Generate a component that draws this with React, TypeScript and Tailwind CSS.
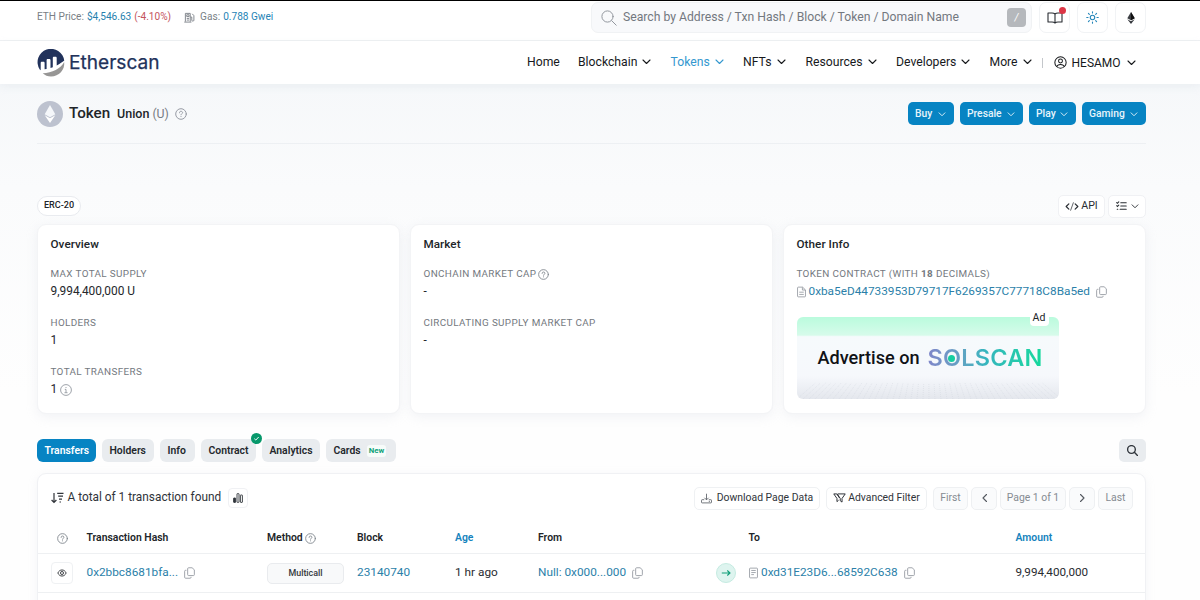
import type { ReactNode } from "react";

const Chevron = ({ className = "h-[6px] w-[9px]" }: { className?: string }) => (
  <svg viewBox="0 0 9 6" className={`shrink-0 ${className}`} fill="none" stroke="currentColor" strokeWidth="1.1" strokeLinecap="round" strokeLinejoin="round">
    <path d="M1 1l3.5 3.5L8 1" />
  </svg>
);

const Help = ({ className = "" }: { className?: string }) => (
  <svg viewBox="0 0 12 12" className={`h-[11px] w-[11px] shrink-0 text-[#7d838b] ${className}`} fill="none" stroke="currentColor" strokeWidth="0.95" strokeLinecap="round">
    <circle cx="6" cy="6" r="5.3" />
    <path d="M4.5 4.8C4.5 3.7 5.1 3.3 6 3.3s1.6.5 1.6 1.4C7.6 5.6 6 5.7 6 6.8M6 8.5v.15" />
  </svg>
);

const Copy = ({ className = "" }: { className?: string }) => (
  <svg viewBox="0 0 12 13" className={`h-[12px] w-[11px] shrink-0 text-[#989da4] ${className}`} fill="none" stroke="currentColor" strokeWidth="1">
    <path d="M5 .8h3.8L11.3 3v5.3a1 1 0 0 1-1 1H5a1 1 0 0 1-1-1V1.8a1 1 0 0 1 1-1z" />
    <path d="M2.6 3.6H1.7a1 1 0 0 0-1 1v6.6a1 1 0 0 0 1 1h5a1 1 0 0 0 1-1v-.5" />
  </svg>
);

const Doc = () => (
  <svg viewBox="0 0 10 12" className="h-[12px] w-[9px] shrink-0 text-[#8f959c]" fill="none" stroke="currentColor" strokeWidth="0.9">
    <path d="M1.5.6h4.7L9.4 3.7v6.8a.9.9 0 0 1-.9.9h-7a.9.9 0 0 1-.9-.9v-9a.9.9 0 0 1 .9-.9zM6 .8v3h3.2M2.5 6.2h5M2.5 8.7h5" />
  </svg>
);

const DocLines = () => (
  <svg viewBox="0 0 10 12" className="h-[12px] w-[9px] shrink-0 text-[#8f959c]" fill="none" stroke="currentColor" strokeWidth="0.9">
    <rect x="0.6" y="0.6" width="8.8" height="10.8" rx="0.8" />
    <path d="M2.5 3.2h5M2.5 5.5h5M2.5 7.8h3" />
  </svg>
);

const SearchIcon = ({ className = "" }: { className?: string }) => (
  <svg viewBox="0 0 16 16" className={className} fill="none" stroke="currentColor" strokeLinecap="round">
    <circle cx="6.5" cy="6.5" r="5.6" />
    <path d="M10.7 10.7l4.500 4.500" />
  </svg>
);

const SquareButton = ({ children }: { children: ReactNode }) => (
  <button className="relative flex h-[31px] w-[31px] items-center justify-center rounded-[7px] border border-[#f1f3f5] bg-white">{children}</button>
);

const NavItem = ({ label, width, active }: { label: string; width: string; active?: boolean }) => (
  <a className={`flex items-center justify-between ${width} ${active ? "text-[#3498cf]" : "text-[#17191c]"}`}>
    {label}
    <Chevron />
  </a>
);

const ActionButton = ({ label, width }: { label: string; width: string }) => (
  <button className={`flex h-[23px] items-center justify-between rounded-[5px] bg-[#0784c3] pt-px pr-[8px] pl-[7px] text-[10.3px] font-medium text-[#e7f4fb] ${width}`}>
    {label}
    <Chevron className="h-[5px] w-[8px]" />
  </button>
);

const Card = ({ title, children }: { title: string; children: ReactNode }) => (
  <section className="h-[190px] w-[363px] rounded-[9px] border border-[#f3f4f6] bg-white pt-[10px] pl-[12.5px] shadow-[0_3px_12px_rgba(189,197,209,0.2)]">
    <h2 className="h-[18px] text-[11.7px] leading-[18px] font-medium tracking-[0.05px] text-[#212529]">{title}</h2>
    {children}
  </section>
);

const Stat = ({ label, children, first }: { label: ReactNode; children: ReactNode; first?: boolean }) => (
  <div className={`${first ? "mt-[12px]" : "mt-[13px]"} h-[36px]`}>
    <div className="flex h-[18px] items-center text-[9.9px] tracking-[0.36px] whitespace-nowrap text-[#747980]">{label}</div>
    <div className="flex h-[18px] items-center text-[11.9px] text-[#25282c]">{children}</div>
  </div>
);

const Tab = ({ label, width, active, children }: { label: string; width: string; active?: boolean; children?: ReactNode }) => (
  <button className={`relative flex h-[23px] items-center rounded-[6px] px-[7.5px] pt-px text-[10.4px] font-semibold ${width} ${active ? "bg-[#0784c3] text-white" : "bg-[#e9ecef] text-[#24282d]"}`}>
    {label}
    {children}
  </button>
);

const PageButton = ({ width, children }: { width: string; children: ReactNode }) => (
  <button className={`flex h-[23px] items-center justify-center rounded-[5px] border border-[#eef0f2] bg-[#fafbfc] text-[10.4px] text-[#868b92] ${width}`}>{children}</button>
);

const rowGrid = "grid grid-cols-[48.5px_180.5px_90px_98px_83px_177.5px_33px_267px_1fr] items-center";

export default function App() {
  return (
    <div className="h-[600px] w-[1200px] overflow-hidden bg-[#fefefe] font-['Roboto',sans-serif] text-[12px] leading-none text-[#212529]">
      <div className="flex h-[41px] items-start justify-between border-t border-b border-t-black border-b-[#eff1f3] bg-white pr-[54px] pl-[37px]">
        <div className="flex h-[33px] items-center text-[10.1px] text-[#7a7f86]">
          <span>ETH Price:</span>
          <span className="ml-[3px] text-[#277fae]">$4,546.63</span>
          <span className="ml-[3px] text-[#c4525c]">(-4.10%)</span>
          <svg viewBox="0 0 12 12" className="mr-[5px] ml-[13px] h-[11px] w-[11px] text-[#7a7f86]" fill="none" stroke="currentColor" strokeWidth="1">
            <path d="M1.500 10.500v-9h5.300v9M.3 11h7.800M3 3h2.500v2H3zM3 7h2.500M3 8.800h2.500M7 5.500h1.500v3.500c0 1.300 2.300 1.300 2.300 0V4L9 2" />
          </svg>
          <span>Gas:</span>
          <span className="ml-[3px] text-[#2583b5]">0.788 Gwei</span>
        </div>
        <div className="flex pt-px">
          <div className="flex h-[31px] w-[441px] items-center rounded-[7px] border border-[#f0f2f4] bg-[#f8f9fb] pr-[5px] pl-[9px] text-[12.2px] text-[#73787f]">
            <SearchIcon className="h-[16px] w-[16px] text-[#92979e]" />
            <span className="ml-[6px] whitespace-nowrap">Search by Address / Txn Hash / Block / Token / Domain Name</span>
            <span className="ml-auto flex h-[19px] w-[19px] items-center justify-center rounded-[4px] bg-[#b5b8bc] text-[10px] text-white italic">/</span>
          </div>
          <div className="ml-[7px] flex gap-[7px]">
            <SquareButton>
              <svg viewBox="0 0 16 12" className="h-[12px] w-[16px] text-[#292d32]" fill="none" stroke="currentColor" strokeWidth="1.1" strokeLinejoin="round">
                <path d="M8 2v9M8 2C7 1 6 1 5 1H1v9h4c1 0 2 0 3 1 1-1 2-1 3-1h4V1h-4C10 1 9 1 8 2z" />
              </svg>
              <span className="absolute top-[4px] right-[3px] h-[7px] w-[7px] rounded-full bg-[#dc3545]" />
            </SquareButton>
            <SquareButton>
              <svg viewBox="0 0 14 14" className="h-[13px] w-[13px] text-[#2587ba]" fill="none" stroke="currentColor" strokeWidth="1.2" strokeLinecap="round">
                <circle cx="7" cy="7" r="2.4" />
                <path d="M7 .8v1.400M7 11.800v1.400M.8 7h1.400M11.800 7h1.400M2.600 2.600l1 1M10.400 10.400l1 1M2.600 11.400l1-1M10.400 3.600l1-1" />
              </svg>
            </SquareButton>
            <SquareButton>
              <svg viewBox="0 0 8 13" className="h-[12px] w-[8px]">
                <path d="M4 0l4 6.700-4 2.300-4-2.300z" fill="#3b3e43" />
                <path d="M4 0l4 6.700-4 2.300z" fill="#111" />
                <path d="M0 7.800L4 10l4-2.200-4 5.200z" fill="#34373c" />
              </svg>
            </SquareButton>
          </div>
        </div>
      </div>

      <header className="relative flex h-[43px] items-center bg-white pl-[37px] shadow-[0_3px_8px_rgba(189,197,209,0.18)]">
        <svg viewBox="0 0 28 28" className="h-[28px] w-[28px]">
          <path d="M2.700 20.500A13.400 13.400 0 1 1 27.300 12C25 16 17 20 6.300 20.800V13.200H4v8z" fill="#21325b" />
          <path d="M3.700 21V14c0-.8.500-1.200 1.100-1.200h1.700c.7 0 1.100.5 1.100 1.200v6.400l2-.3V11.200c0-.7.5-1.200 1.100-1.200h1.700c.6 0 1.100.5 1.100 1.200v7.800l2.300-.8V9c0-.7.500-1.200 1.100-1.200h1.700c.6 0 1.100.5 1.100 1.200v7.500c3-1.700 6-3.700 8-5.300l.3 1.200c-3 5-11 10.500-24.300 11z" fill="white" />
          <path d="M5.700 24.200C15 23.900 24 19.500 27.200 13 28 21 22 27.500 14 27.500c-3.200 0-6.200-1.300-8.300-3.300z" fill="#979695" />
        </svg>
        <span className="ml-[4px] w-[92px] font-['Inter',sans-serif] text-[19.1px] text-[#21325b] [-webkit-text-stroke:0.25px_#21325b]">Etherscan</span>
        <nav className="ml-[366px] flex items-center gap-[19.5px] text-[12.2px]">
          <a className="w-[31.5px] text-[#17191c]">Home</a>
          <NavItem label="Blockchain" width="w-[73px]" />
          <NavItem label="Tokens" width="w-[53px]" active />
          <NavItem label="NFTs" width="w-[43px]" />
          <NavItem label="Resources" width="w-[71px]" />
          <NavItem label="Developers" width="w-[74px]" />
          <NavItem label="More" width="w-[42px]" />
        </nav>
        <span className="ml-[10px] h-[10px] w-px bg-[#c4c7cb]" />
        <svg viewBox="0 0 14 14" className="ml-[11px] h-[13px] w-[13px] text-[#17191c]" fill="none" stroke="currentColor" strokeWidth="1.100">
          <circle cx="7" cy="7" r="6.100" />
          <circle cx="7" cy="5.400" r="2.100" />
          <path d="M3 11.400c.5-1.700 1.700-2.300 4-2.300s3.500.6 4 2.300" />
        </svg>
        <a className="ml-[5px] flex w-[64px] items-center justify-between text-[12px] text-[#17191c]">
          HESAMO
          <Chevron />
        </a>
      </header>

      <main className="h-[516px] bg-linear-to-b from-[#f6f8fa] via-[#fafbfc] via-20% to-[#fefefe] to-60% px-[37px]">
        <div className="flex h-[60px] w-[1109px] items-center border-b border-[#edf0f3]">
          <svg viewBox="0 0 26 26" className="h-[26px] w-[26px]">
            <circle cx="13" cy="13" r="13" fill="#bdc2cf" />
            <path d="M13 4l5.300 9.200-5.300 3-5.300-3z" fill="#f5f7fa" />
            <path d="M7.700 14.300l5.300 3 5.300-3L13 22z" fill="#fff" />
          </svg>
          <h1 className="mt-px ml-[6px] w-[48px] text-[15.200px] font-medium text-[#212529]">Token</h1>
          <span className="mt-px text-[12.500px] font-medium text-[#212529]">Union</span>
          <span className="mt-px ml-[3px] text-[12.300px] text-[#777c84]">(U)</span>
          <Help className="ml-[6px] h-[12px] w-[12px] text-[#9297a0]" />
          <div className="ml-auto flex gap-[6px]">
            <ActionButton label="Buy" width="w-[46px]" />
            <ActionButton label="Presale" width="w-[63px]" />
            <ActionButton label="Play" width="w-[47px]" />
            <ActionButton label="Gaming" width="w-[64px]" />
          </div>
        </div>

        <div className="mt-[50px] flex h-[24px] w-[1109px] items-center">
          <span className="flex h-[20px] w-[44px] items-center justify-center rounded-full border border-[#e9ebef] bg-white text-[9.100px] font-medium">ERC-20</span>
          <button className="ml-auto flex h-[23px] w-[47px] items-center justify-center gap-[2px] rounded-[5px] border border-[#f0f1f4] bg-white text-[10.600px] text-[#292d32]">
            <svg viewBox="0 0 15 10" className="h-[9px] w-[14px]" fill="none" stroke="currentColor" strokeWidth="1.300" strokeLinecap="round" strokeLinejoin="round">
              <path d="M4 2L1 5l3 3M11 2l3 3-3 3" />
              <path d="M9 .8L6 9.200" strokeWidth="0.800" />
            </svg>
            API
          </button>
          <button className="ml-[3px] flex h-[23px] w-[38px] items-center justify-center gap-[4px] rounded-[5px] border border-[#f0f1f4] bg-white text-[#292d32]">
            <svg viewBox="0 0 12 11" className="h-[10px] w-[11px]" fill="none" stroke="currentColor" strokeWidth="1.200" strokeLinecap="round">
              <path d="M.7 1.700l.8.800L3 1M.7 5.200l.8.800L3 4.500M5.200 2h6M5.200 5.500h6M4.500 9h6.700M1.300 9h.6" />
            </svg>
            <Chevron className="h-[5px] w-[8px]" />
          </button>
        </div>

        <div className="mt-[6px] flex gap-[10px]">
          <Card title="Overview">
            <Stat first label="MAX TOTAL SUPPLY">9,994,400,000 U</Stat>
            <Stat label="HOLDERS">1</Stat>
            <Stat label="TOTAL TRANSFERS">
              1
              <svg viewBox="0 0 12 12" className="ml-[3px] h-[12px] w-[12px] text-[#9398a0]" fill="none" stroke="currentColor" strokeWidth="0.900">
                <circle cx="6" cy="6" r="5.400" />
                <path d="M6 3v1M4.800 5.400H6v3.100M4.500 8.700h3" />
              </svg>
            </Stat>
          </Card>
          <Card title="Market">
            <Stat first label={<>ONCHAIN MARKET CAP <Help className="ml-[2px]" /></>}>-</Stat>
            <Stat label="CIRCULATING SUPPLY MARKET CAP">-</Stat>
          </Card>
          <Card title="Other Info">
            <Stat first label={<span>TOKEN CONTRACT (WITH <b className="font-bold">18</b> DECIMALS)</span>}>
              <Doc />
              <a className="ml-[3px] w-[283px] text-[11.800px] text-[#2b7fa9]">0xba5eD44733953D79717F6269357C77718C8Ba5ed</a>
              <Copy className="ml-[4px]" />
            </Stat>
            <div className="relative mt-[16px] flex h-[82px] w-[262px] items-center rounded-[6px] bg-[linear-gradient(#bafbdd_0%,#d6fbea_22%,#f6fafc_24%,#f6f8fc_72%,#e4e7ed_100%)]">
              <svg viewBox="0 0 262 18" className="absolute bottom-0 left-0 h-[18px] w-[262px] rounded-b-[6px]" stroke="#cfd4dc" strokeWidth="0.600" opacity="0.700">
                {Array.from({ length: 45 }, (_, i) => (
                  <line key={i} x1={i * 6} y1="18" x2={131 + (i * 6 - 131) * 0.86} y2="2" strokeDasharray="1 1" />
                ))}
              </svg>
              <span className="ml-[21px] w-[104px] text-[18.100px] font-medium whitespace-nowrap text-[#101216]">Advertise on</span>
              <span className="relative ml-[6px] bg-linear-to-r from-[#7f86c9] via-[#35b5be] via-50% to-[#12d99b] bg-clip-text font-['Inter',sans-serif] text-[23.500px] font-semibold tracking-[0.200px] text-transparent">
                SOLSCAN
                <span className="absolute top-[9px] left-[20.500px] h-[7px] w-[7px] rounded-full bg-[#16cfa0]" />
              </span>
              <span className="absolute -top-[6px] right-[10px] flex h-[15px] w-[19px] items-center justify-center rounded-[4px] bg-white text-[10.500px] text-[#212529]">Ad</span>
            </div>
          </Card>
        </div>

        <div className="mt-[25px] flex w-[1109px] items-center">
          <div className="flex gap-[6px]">
            <Tab label="Transfers" width="w-[59px]" active />
            <Tab label="Holders" width="w-[52px]" />
            <Tab label="Info" width="w-[35px]" />
            <Tab label="Contract" width="w-[55px]">
              <span className="absolute -top-[6px] -right-[6px] flex h-[11px] w-[11px] items-center justify-center rounded-full bg-[#07986b]">
                <svg viewBox="0 0 8 8" className="h-[7px] w-[7px]" fill="none" stroke="white" strokeWidth="1.100">
                  <path d="M1.500 4.200l1.700 1.600 3.300-3.500" />
                </svg>
              </span>
            </Tab>
            <Tab label="Analytics" width="w-[58px]" />
            <Tab label="Cards" width="w-[70px]">
              <span className="ml-[6px] flex h-[12px] items-center rounded-[3px] bg-[#f7fcfa] px-[2px] text-[7.800px] font-bold text-[#12a37a]">New</span>
            </Tab>
          </div>
          <button className="ml-auto flex h-[23px] w-[27px] items-center justify-center rounded-[5px] bg-[#e9ecef] text-[#30353b]">
            <SearchIcon className="h-[11px] w-[11px] stroke-2" />
          </button>
        </div>

        <section className="mt-[11px] h-[140px] w-[1109px] rounded-t-[9px] border border-[#f0f1f4] bg-white shadow-[0_2px_10px_rgba(189,197,209,0.15)]">
          <div className="flex h-[48px] items-center pr-[12px] pl-[12.500px] text-[#30343a]">
            <svg viewBox="0 0 13 12" className="h-[12px] w-[13px]" fill="none" stroke="currentColor" strokeWidth="1.200">
              <path d="M3 1v9.500M.6 8L3 10.500 5.400 8M6.200 1.300h6.300M7.200 4.200H12M8 7.100h3M8.500 10h1.500" />
            </svg>
            <span className="ml-[4px] w-[154px] text-[11.850px] whitespace-nowrap">A total of 1 transaction found</span>
            <span className="ml-[6px] flex h-[20px] w-[20px] items-center justify-center rounded-[4px] border border-[#f0f1f4]">
              <svg viewBox="0 0 10 10" className="h-[10px] w-[10px]" fill="none" stroke="currentColor" strokeWidth="0.900">
                <rect x=".6" y="5" width="2" height="4.400" rx=".4" fill="currentColor" />
                <rect x="4" y=".6" width="2" height="8.800" rx=".4" />
                <rect x="7.400" y="2" width="2" height="7.400" rx=".4" />
              </svg>
            </span>
            <div className="ml-auto flex text-[10.400px]">
              <button className="flex h-[23px] w-[126px] items-center justify-center gap-[5px] rounded-[5px] border border-[#eff1f3] whitespace-nowrap">
                <svg viewBox="0 0 12 11" className="h-[11px] w-[11px] text-[#555a61]" fill="none" stroke="currentColor" strokeWidth="0.900">
                  <path d="M6 .3v6.500M3.700 4.700L6 7l2.300-2.300M3.500 6.800H1.300a.8.8 0 0 0-.8.800v2c0 .4.300.7.8.7h9.400c.5 0 .8-.3.8-.7v-2a.8.8 0 0 0-.8-.8H8.500M8.500 8.600h1.300" />
                </svg>
                Download Page Data
              </button>
              <button className="ml-[6px] flex h-[23px] w-[101px] items-center justify-center gap-[2px] rounded-[5px] border border-[#eff1f3] whitespace-nowrap">
                <svg viewBox="0 0 14 11" className="h-[10px] w-[13px]" fill="none" stroke="currentColor" strokeWidth="1.100" strokeLinejoin="round">
                  <path d="M.7 1l3.500 5v3.500L6 8M.7 1H4l3 4.500M5 1h8.300L9.800 6v4L7.800 8.500V6L4.500 1" />
                </svg>
                Advanced Filter
              </button>
              <div className="ml-[6px] flex gap-[3px]">
                <PageButton width="w-[35px]">First</PageButton>
                <PageButton width="w-[26px]">
                  <Chevron className="h-[6px] w-[9px] rotate-90 text-[#555a61]" />
                </PageButton>
                <PageButton width="w-[66px]">Page 1 of 1</PageButton>
                <PageButton width="w-[26px]">
                  <Chevron className="h-[6px] w-[9px] -rotate-90 text-[#555a61]" />
                </PageButton>
                <PageButton width="w-[35px]">Last</PageButton>
              </div>
            </div>
          </div>
          <div className={`h-[32px] border-b border-[#eef0f2] pt-[2px] text-[10.400px] font-semibold text-[#212529] ${rowGrid}`}>
            <Help className="ml-[19px]" />
            <span>Transaction Hash</span>
            <span className="flex items-center gap-[2px]">
              Method <Help />
            </span>
            <span>Block</span>
            <span className="text-[#1583bd]">Age</span>
            <span>From</span>
            <span />
            <span>To</span>
            <span className="text-[#1583bd]">Amount</span>
          </div>
          <div className={`h-[39px] border-b border-[#eef0f2] text-[11.800px] whitespace-nowrap text-[#292c31] ${rowGrid}`}>
            <span className="ml-[13px] flex h-[22px] w-[22px] items-center justify-center rounded-[4px] border border-[#eff1f3]">
              <svg viewBox="0 0 12 10" className="h-[8px] w-[10px]" fill="none" stroke="currentColor" strokeWidth="1.100">
                <path d="M.8 5C2 2.400 3.800 1.200 6 1.200S10 2.400 11.200 5C10 7.600 8.200 8.800 6 8.800S2 7.600.8 5z" />
                <circle cx="6" cy="5" r="1.900" />
              </svg>
            </span>
            <span className="flex items-center text-[#2b7fa9]">
              <a className="w-[91px]">0x2bbc8681bfa...</a>
              <Copy className="ml-[6px]" />
            </span>
            <span className="flex h-[21px] w-[77px] items-center justify-center rounded-[5px] border border-[#e9ebee] bg-[#f8f9fa] text-[8.900px] font-medium text-[#34383d]">Multicall</span>
            <a className="text-[#2b7fa9]">23140740</a>
            <span>1 hr ago</span>
            <span className="flex items-center text-[#2b7fa9]">
              <a className="w-[89px]">Null: 0x000...000</a>
              <Copy className="ml-[5px]" />
            </span>
            <span className="flex h-[20px] w-[20px] items-center justify-center rounded-full border border-[#c5ebe1] bg-[#def4ef] text-[#0f9e78]">
              <svg viewBox="0 0 10 8" className="h-[8px] w-[10px]" fill="none" stroke="currentColor" strokeWidth="1.100">
                <path d="M.8 4h8.200M6.300 1.500L9 4 6.300 6.500" />
              </svg>
            </span>
            <span className="flex items-center text-[#2b7fa9]">
              <DocLines />
              <a className="ml-[3.500px] w-[137px]">0xd31E23D6...68592C638</a>
              <Copy className="ml-[6px]" />
            </span>
            <span className="text-[11.700px]">9,994,400,000</span>
          </div>
        </section>
      </main>
    </div>
  );
}
